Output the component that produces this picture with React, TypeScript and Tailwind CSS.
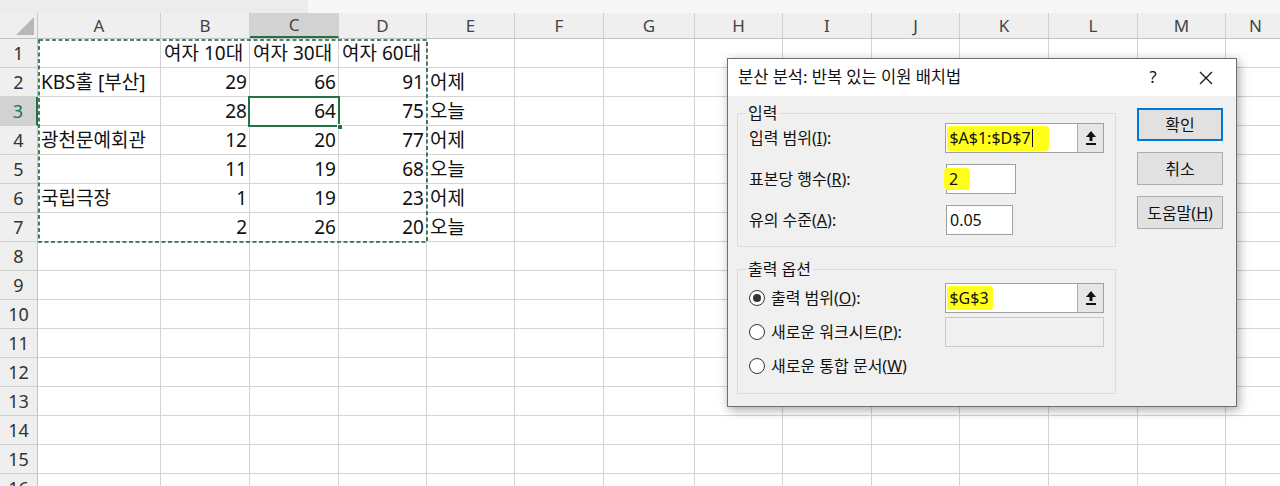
import React from 'react';

const cols = [
  { l: 'A', w: 123 },
  { l: 'B', w: 89 },
  { l: 'C', w: 89 },
  { l: 'D', w: 88 },
  { l: 'E', w: 88 },
  { l: 'F', w: 89 },
  { l: 'G', w: 91 },
  { l: 'H', w: 88 },
  { l: 'I', w: 89 },
  { l: 'J', w: 88 },
  { l: 'K', w: 89 },
  { l: 'L', w: 89 },
  { l: 'M', w: 88 },
  { l: 'N', w: 60 },
];

const data: string[][] = [
  ['', '여자 10대', '여자 30대', '여자 60대', ''],
  ['KBS홀 [부산]', '29', '66', '91', '어제'],
  ['', '28', '64', '75', '오늘'],
  ['광천문예회관', '12', '20', '77', '어제'],
  ['', '11', '19', '68', '오늘'],
  ['국립극장', '1', '19', '23', '어제'],
  ['', '2', '26', '20', '오늘'],
];

const font = "font-['Noto_Sans','Noto_Sans_CJK_KR',sans-serif]";

function UploadIcon() {
  return (
    <svg width="12" height="16" viewBox="0 0 12 16">
      <polygon points="6,1 11,7 1,7" fill="#111" />
      <rect x="4.5" y="6" width="3" height="5" fill="#111" />
      <rect x="1" y="13" width="10" height="2" fill="#111" />
    </svg>
  );
}

function Radio({ on }: { on?: boolean }) {
  return (
    <span className="w-[16px] h-[16px] rounded-full border border-[#333] bg-white flex items-center justify-center shrink-0">
      {on && <span className="w-[8px] h-[8px] rounded-full bg-[#333]" />}
    </span>
  );
}

function RefInput({ value, disabled }: { value?: string; disabled?: boolean }) {
  return (
    <div className={`w-[159px] h-[30px] border flex ${disabled ? 'bg-[#f0f0f0] border-[#c8c8c8]' : 'bg-white border-[#a0a0a0]'}`}>
      <div className="flex-1 flex items-center pl-[1px]">
        {value && (
          <span className="h-[24px] flex items-center px-[2px] pr-[4px] rounded-[3px] bg-[#ffff1a]">{value}</span>
        )}
      </div>
      {!disabled && (
        <div className="w-[26px] h-full border-l border-[#adadad] bg-[#e6e6e6] flex items-center justify-center">
          <UploadIcon />
        </div>
      )}
    </div>
  );
}

function Dialog() {
  return (
    <div className={`absolute left-[727px] top-[58px] w-[510px] h-[349px] border border-[#6f6f6f] bg-[#f0f0f0] shadow-[2px_3px_10px_rgba(0,0,0,0.35)] text-[16px] text-[#111] ${font}`}>
      <div className="h-[37px] bg-white flex items-center pl-[10px] text-[16.5px]">
        <span className="flex-1">분산 분석: 반복 있는 이원 배치법</span>
        <span className="w-[20px] text-center mr-[36px]">?</span>
        <svg width="14" height="14" viewBox="0 0 14 14" className="mr-[23px]">
          <path d="M1 1 L13 13 M13 1 L1 13" stroke="#111" strokeWidth="1.2" />
        </svg>
      </div>
      <div className="flex pl-[9px]">
        <div className="w-[379px] flex flex-col">
          <fieldset className="mt-[7px] border border-[#dcdcdc] px-[11px] pt-[0px] pb-[11px] m-0 min-w-0">
            <legend className="ml-[-3px] px-[2px] leading-[20px]">입력</legend>
            <div className="flex flex-col gap-[11px]">
              <div className="h-[30px] flex items-center">
                <span className="w-[197px]">입력 범위(<u>I</u>):</span>
                <div className="w-[159px] h-[30px] border border-[#a0a0a0] bg-white flex">
                  <div className="flex-1 flex items-center pl-[1px]">
                    <span className="h-[25px] flex items-center pl-[2px] pr-[16px] rounded-[4px] bg-[#ffff1a]">
                      $A$1:$D$7<span className="w-[1px] h-[18px] bg-[#111] ml-[1px]" />
                    </span>
                  </div>
                  <div className="w-[26px] h-full border-l border-[#adadad] bg-[#e6e6e6] flex items-center justify-center">
                    <UploadIcon />
                  </div>
                </div>
              </div>
              <div className="h-[30px] flex items-center">
                <span className="w-[197px]">표본당 행수(<u>R</u>):</span>
                <div className="w-[70px] h-[30px] border border-[#a0a0a0] bg-white flex items-center">
                  <span className="ml-[-3px] h-[22px] flex items-center pl-[5px] pr-[12px] rounded-[4px] bg-[#ffff1a]">2</span>
                </div>
              </div>
              <div className="h-[30px] flex items-center">
                <span className="w-[197px]">유의 수준(<u>A</u>):</span>
                <div className="w-[67px] h-[30px] border border-[#a0a0a0] bg-white flex items-center pl-[3px]">0.05</div>
              </div>
            </div>
          </fieldset>
          <fieldset className="mt-[12px] border border-[#dcdcdc] px-[11px] pt-[0px] pb-[12px] m-0 min-w-0">
            <legend className="ml-[-3px] px-[2px] leading-[20px]">출력 옵션</legend>
            <div className="flex flex-col gap-[4px] pt-[4px]">
              <div className="h-[30px] flex items-center">
                <span className="w-[197px] flex items-center gap-[6px]">
                  <Radio on />
                  <span>출력 범위(<u>O</u>):</span>
                </span>
                <RefInput value="$G$3" />
              </div>
              <div className="h-[30px] flex items-center">
                <span className="w-[197px] flex items-center gap-[6px]">
                  <Radio />
                  <span>새로운 워크시트(<u>P</u>):</span>
                </span>
                <RefInput disabled />
              </div>
              <div className="h-[30px] flex items-center">
                <span className="w-[197px] flex items-center gap-[6px]">
                  <Radio />
                  <span className="whitespace-nowrap">새로운 통합 문서(<u>W</u>)</span>
                </span>
              </div>
            </div>
          </fieldset>
        </div>
        <div className="ml-[21px] w-[86px] flex flex-col gap-[11px] pt-[12px]">
          <div className="h-[33px] border-2 border-[#0078d7] bg-[#e1e1e1] flex items-center justify-center">확인</div>
          <div className="h-[33px] border border-[#adadad] bg-[#e1e1e1] flex items-center justify-center">취소</div>
          <div className="h-[33px] border border-[#adadad] bg-[#e1e1e1] flex items-center justify-center">도움말(<u>H</u>)</div>
        </div>
      </div>
    </div>
  );
}

export default function App() {
  const rows = Array.from({ length: 16 }, (_, i) => i + 1);
  return (
    <div className={`relative w-[1280px] h-[486px] overflow-hidden bg-white ${font}`}>
      {/* top strip */}
      <div className="h-[13px] flex">
        <div className="w-[308px] bg-[#ececec]" />
        <div className="flex-1 bg-[#f7f7f7]" />
      </div>

      {/* column headers */}
      <div className="flex h-[26px] bg-[#efefef] border-b border-[#c2c2c2]">
        <div className="w-[38px] shrink-0 border-r border-[#c6c6c6] flex items-end justify-end p-[3px]">
          <svg width="18" height="18" viewBox="0 0 18 18">
            <polygon points="18,0 18,18 0,18" fill="#b8b8b8" />
          </svg>
        </div>
        {cols.map((c) => (
          <div
            key={c.l}
            style={{ width: c.w }}
            className={`shrink-0 border-r border-[#d0d0d0] flex items-center justify-center text-[17px] text-[#444] ${c.l === 'C' ? 'bg-[#d2d2d2] border-b-2 border-b-[#217346] text-[#333]' : ''}`}
          >
            {c.l}
          </div>
        ))}
      </div>

      {/* rows */}
      {rows.map((r) => (
        <div key={r} className="flex h-[29px]">
          <div
            className={`w-[38px] shrink-0 border-b border-[#d0d0d0] flex items-center justify-center text-[18px] text-[#333] ${r === 3 ? 'bg-[#d2d2d2] border-r-2 border-r-[#217346] text-[#217346]' : 'bg-[#efefef] border-r border-r-[#c2c2c2]'}`}
          >
            {r}
          </div>
          {cols.map((c, ci) => {
            const v = data[r - 1]?.[ci] ?? '';
            const num = /^\d+$/.test(v);
            return (
              <div
                key={c.l}
                style={{ width: c.w }}
                className={`shrink-0 border-r border-b border-[#d4d4d4] flex items-center pt-[1px] text-[19px] text-[#111] whitespace-nowrap overflow-visible ${num ? 'justify-end pr-[2px]' : 'pl-[3px]'}`}
              >
                {v}
              </div>
            );
          })}
        </div>
      ))}

      {/* copy range marching ants A1:D7 */}
      <svg className="absolute left-[38px] top-[39px]" width="391" height="205">
        <rect x="1" y="1" width="388" height="202" fill="none" stroke="#1d5c38" strokeWidth="1.6" strokeDasharray="4 2.5" />
      </svg>

      {/* active cell C3 */}
      <div className="absolute left-[248px] top-[96px] w-[92px] h-[31px] border-2 border-[#217346]" />
      <div className="absolute left-[337px] top-[124px] w-[6px] h-[6px] bg-[#217346] border border-white" />

      <Dialog />
    </div>
  );
}
